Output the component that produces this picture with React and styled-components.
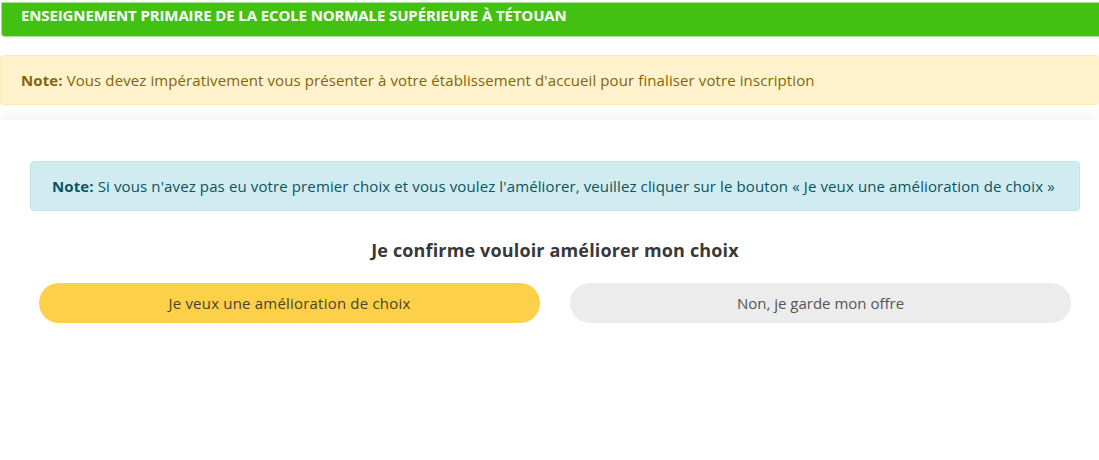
import React from 'react';
import styled, { createGlobalStyle } from 'styled-components';

const GlobalStyle = createGlobalStyle`
  html, body {
    margin: 0;
    padding: 0;
    background: #ffffff;
    font-family: "Open Sans", "Noto Sans", sans-serif;
    overflow: hidden;
  }
`;

const Page = styled.div`
  width: 1099px;
  height: 460px;
  overflow: hidden;
  padding-top: 2px;
  box-sizing: border-box;
`;

const Banner = styled.div`
  margin-left: 1px;
  height: 35px;
  box-sizing: border-box;
  background: #43c112;
  border: 1px solid #a8e29a;
  border-right: none;
  border-radius: 0 0 0 4px;
  color: #ffffff;
  font-weight: 700;
  font-size: 15px;
  text-transform: uppercase;
  padding: 2px 0 0 19px;
  letter-spacing: -0.12px;
`;

const Alert = styled.div`
  box-sizing: border-box;
  height: 50px;
  display: flex;
  align-items: center;
  border-radius: 4px;
  font-size: 15px;
  background: ${p => (p.$tone === 'info' ? '#d1ecf1' : '#fff2cd')};
  border: 1px solid ${p => (p.$tone === 'info' ? '#bee5eb' : '#ffeab2')};
  color: ${p => (p.$tone === 'info' ? '#0c5460' : '#856404')};
  padding-left: ${p => (p.$tone === 'info' ? '21px' : '20px')};
  letter-spacing: ${p => (p.$tone === 'info' ? '0.12px' : '0.1px')};

  b {
    font-weight: 700;
    margin-right: 4px;
  }
`;

const WarnAlert = styled(Alert)`
  margin-top: 18px;
  border-right: none;
`;

const Card = styled.div`
  margin-top: 15px;
  background: #ffffff;
  box-shadow: 0 -6px 10px rgba(0, 0, 0, 0.04);
  padding: 41px 19px 40px 30px;
  height: 340px;
  box-sizing: border-box;
`;

const Title = styled.h3`
  margin: 30px 0 0;
  text-align: center;
  font-size: 18px;
  font-weight: 700;
  color: #383838;
  letter-spacing: 0.15px;
  line-height: 18px;
`;

const ButtonRow = styled.div`
  display: grid;
  grid-template-columns: 1fr 1fr;
  gap: 30px;
  padding: 0 9px;
  margin-top: 24px;
`;

const Choice = styled.button`
  height: 40px;
  border: none;
  border-radius: 20px;
  font-family: inherit;
  font-size: 15px;
  cursor: pointer;
  letter-spacing: ${p => (p.$primary ? '0.2px' : '0')};
  background: ${p => (p.$primary ? '#fdd04a' : '#ececec')};
  color: ${p => (p.$primary ? '#4a4426' : '#555555')};
`;

export default function App() {
  return (
    <Page>
      <GlobalStyle />
      <Banner>Enseignement primaire de la Ecole Normale Supérieure à Tétouan</Banner>
      <WarnAlert>
        <b>Note:</b> Vous devez impérativement vous présenter à votre établissement d'accueil pour finaliser votre inscription
      </WarnAlert>
      <Card>
        <Alert $tone="info">
          <b>Note:</b> Si vous n'avez pas eu votre premier choix et vous voulez l'améliorer, veuillez cliquer sur le bouton « Je veux une amélioration de choix »
        </Alert>
        <Title>Je confirme vouloir améliorer mon choix</Title>
        <ButtonRow>
          <Choice $primary>Je veux une amélioration de choix</Choice>
          <Choice>Non, je garde mon offre</Choice>
        </ButtonRow>
      </Card>
    </Page>
  );
}
